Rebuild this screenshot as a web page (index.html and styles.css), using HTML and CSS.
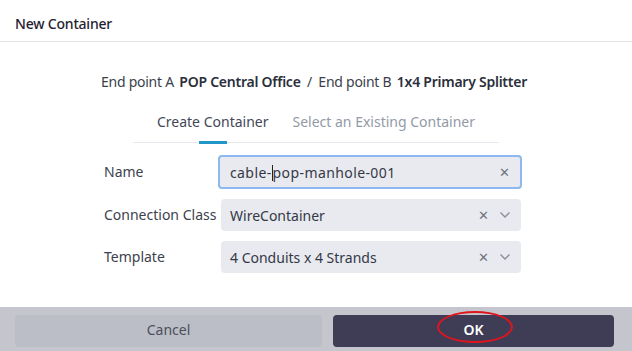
FILE: index.html
```html
<!DOCTYPE html>
<html lang="en">
<head>
  <meta charset="UTF-8">
  <meta name="viewport" content="width=device-width, initial-scale=1.0">
  <title>New Container</title>
  <link rel="stylesheet" href="styles.css">
</head>
<body>

  <div class="dialog">
    <div class="dialog-header">New Container</div>

    <div class="dialog-body">
      <div class="endpoints">
        <span>End point A</span> <b>POP Central Office</b>
        <span class="sep">/</span>
        <span>End point B</span> <b>1x4 Primary Splitter</b>
      </div>

      <div class="tabs">
        <div class="tab active">Create Container</div>
        <div class="tab">Select an Existing Container</div>
      </div>

      <div class="form">
        <label class="label">Name</label>
        <div class="field focused">
          <span class="value wide">cable-<span class="caret"></span>pop-manhole-001</span>
          <span class="icon clear">&#x2715;</span>
        </div>

        <label class="label">Connection Class</label>
        <div class="field">
          <span class="value">WireContainer</span>
          <span class="icon clear">&#x2715;</span>
          <svg class="icon chevron" width="12" height="8" viewBox="0 0 12 8"><path d="M1.5 1.5 L6 6 L10.5 1.5" fill="none" stroke="#8a8e99" stroke-width="1.4"/></svg>
        </div>

        <label class="label">Template</label>
        <div class="field">
          <span class="value">4 Conduits x 4 Strands</span>
          <span class="icon clear">&#x2715;</span>
          <svg class="icon chevron" width="12" height="8" viewBox="0 0 12 8"><path d="M1.5 1.5 L6 6 L10.5 1.5" fill="none" stroke="#8a8e99" stroke-width="1.4"/></svg>
        </div>
      </div>
    </div>

    <div class="dialog-footer">
      <button class="btn cancel">Cancel</button>
      <button class="btn ok">OK<span class="ring"></span></button>
    </div>
  </div>

</body>
</html>
```

FILE: styles.css
```css
body {
  margin: 0;
  font-family: "Noto Sans", "Open Sans", sans-serif;
  color: #343846;
  background: #fff;
}

.dialog {
  width: 632px;
  height: 351px;
  display: flex;
  flex-direction: column;
}

.dialog-header {
  height: 42px;
  padding: 5px 0 0 15px;
  box-sizing: border-box;
  display: flex;
  align-items: center;
  font-size: 14px;
  font-weight: 500;
  color: #1f2330;
  border-bottom: 1px solid #e3e4e8;
  letter-spacing: -0.2px;
}

.dialog-body {
  flex: 1;
  display: flex;
  flex-direction: column;
  align-items: center;
  padding-top: 30px;
}

.endpoints {
  font-size: 14px;
  color: #3b3f4c;
  padding-right: 4px;
  letter-spacing: -0.25px;
}

.endpoints b {
  font-weight: 600;
  color: #2b2f3c;
  margin-left: 2px;
}

.endpoints .sep {
  margin: 0 3px;
}

.tabs {
  margin-top: 21px;
  width: 366px;
  display: flex;
  justify-content: center;
  gap: 24px;
  border-bottom: 1px solid #e6e8ee;
  padding-bottom: 11px;
}

.tab {
  font-size: 14px;
  color: #939aa6;
  position: relative;
}

.tab.active {
  color: #434756;
}

.tab.active::after {
  content: "";
  position: absolute;
  left: 50%;
  bottom: -13px;
  width: 28px;
  margin-left: -14px;
  height: 3px;
  background: #2196c9;
}

.form {
  margin: 12px 6px 0 0;
  display: grid;
  grid-template-columns: 114px 304px;
  row-gap: 10px;
  align-items: center;
}

.label {
  font-size: 14px;
  color: #3d414d;
  padding-bottom: 2px;
}

.field {
  height: 32px;
  box-sizing: border-box;
  background: #e8eaef;
  border-radius: 4px;
  display: flex;
  align-items: center;
  padding: 0 10px 0 9px;
  gap: 10px;
  font-size: 14px;
  color: #343846;
  margin: 0 1px 0 3px;
}

.field.focused {
  height: 34px;
  margin: 0;
  border: 2px solid #8db8f2;
  padding-left: 10px;
}

.field .value {
  flex: 1;
}

.field .value.wide {
  letter-spacing: 0.4px;
}

.caret {
  display: inline-block;
  width: 1px;
  height: 16px;
  background: #222;
  vertical-align: -3px;
}

.icon {
  color: #70747f;
  font-size: 13px;
}

.dialog-footer {
  height: 44px;
  background: #c5c6cd;
  display: flex;
  gap: 11px;
  padding: 8px 18px 4px 15px;
  box-sizing: border-box;
}

.btn {
  border: none;
  border-radius: 4px;
  font-family: inherit;
  font-size: 14px;
  height: 32px;
  padding: 0 0 3px;
  position: relative;
}

.btn.cancel {
  width: 307px;
  background: #bbbec6;
  color: #4b4e5c;
}

.btn.ok {
  flex: 1;
  background: #3f3d56;
  color: #fff;
  font-weight: 600;
}

.ring {
  position: absolute;
  left: 104px;
  top: -4px;
  width: 72px;
  height: 28px;
  border: 2px solid #e0141c;
  border-radius: 50%;
}
```
